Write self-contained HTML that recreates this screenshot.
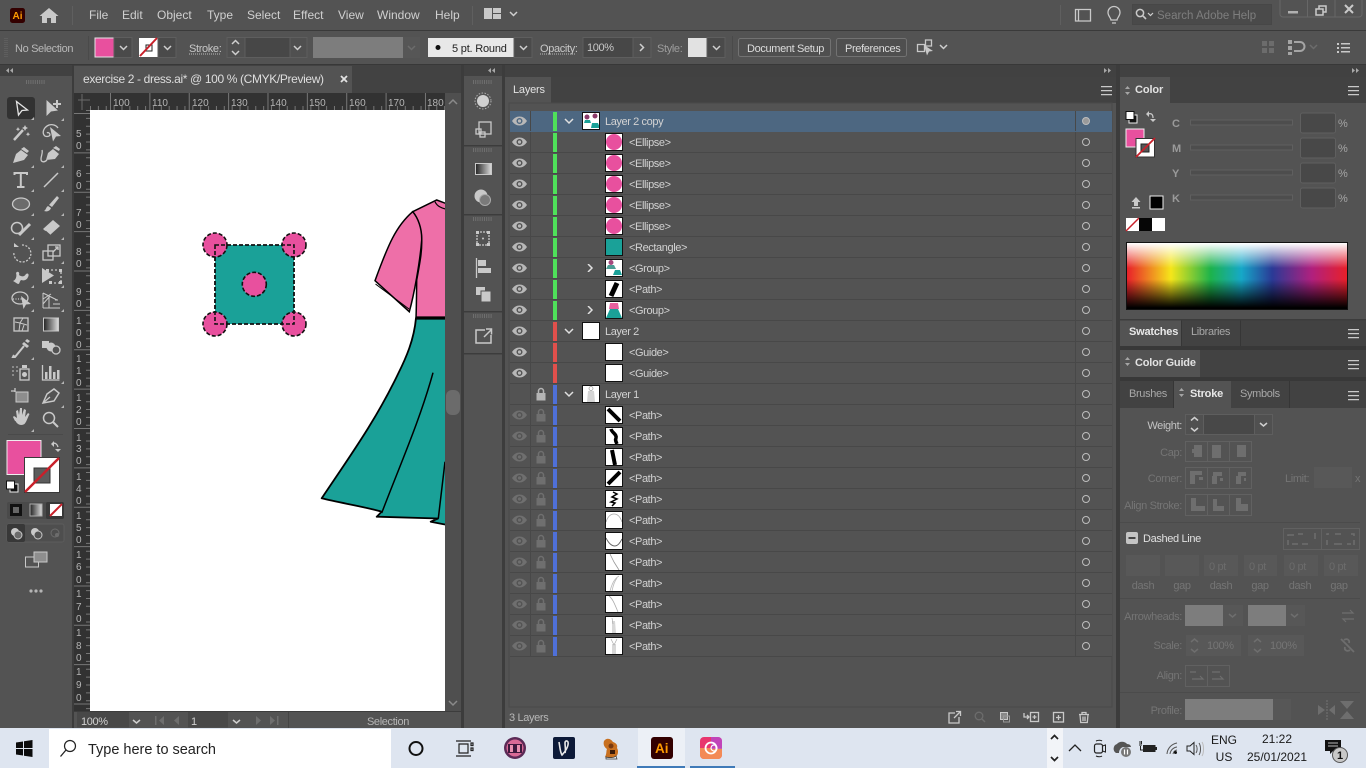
<!DOCTYPE html>
<html><head><meta charset="utf-8"><title>Adobe Illustrator</title>
<style>
*{box-sizing:border-box}
html,body{margin:0;width:1366px;height:768px;overflow:hidden;background:#535353;font-family:"Liberation Sans",sans-serif}
.a{position:absolute}
#rows{position:absolute;left:510px;top:111px;width:602px}
.r{position:relative;height:21px;background:#535353;border-bottom:1px solid #484848;color:#d2d2d2;font-size:11px;letter-spacing:-.4px;line-height:22px}
.r:before{content:"";position:absolute;left:20px;top:0;bottom:0;width:1px;background:#484848}
.r:after{content:"";position:absolute;left:565px;top:0;bottom:0;width:1px;background:#484848}
.sel{background:#4d6781;border-bottom-color:#4d6781}
.e{position:absolute;left:2px;top:5px;width:15px;height:10px;color:#b8b8b8}
.d .e{color:#6f6f6f}
.k{position:absolute;left:25px;top:3px;width:12px;height:14px;color:#6f6f6f}
.k.on{color:#b5b5b5}
.b{position:absolute;left:43px;top:1px;width:3.5px;height:19px}
.g .b{background:#4fe05a}.h .b{background:#e0504c}.d .b,.j .b{background:#4f70d8}
.c{position:absolute;left:54px;top:6px;width:10px;height:8px}
.c.z{left:75px}
.th{position:absolute;left:95px;top:1px;width:18px;height:18px;background:#fff;outline:1px solid #111;outline-offset:-1px}
.th.l{left:72px}
.n{position:absolute;left:119px;top:0;white-space:nowrap}
.n.l{left:95px}
.o{position:absolute;left:572px;top:6px;width:8px;height:8px;border:1.4px solid #bdbdbd;border-radius:50%;z-index:2}
.sel .o{background:#9a9a9a}
#sp{position:absolute;left:1126px;top:242px;width:222px;height:68px;border:1px solid #111;background:linear-gradient(to bottom,#fff 0,rgba(255,255,255,0) 38%,rgba(0,0,0,0) 55%,#000 98%),linear-gradient(90deg,#e8202a 0,#f5e61a 20%,#1db34b 38%,#16a8c8 52%,#2a3a96 66%,#b0207e 84%,#e8202a 100%)}
svg text{font-family:"Liberation Sans",sans-serif;white-space:pre}
.m{font-size:12px;fill:#d0d0d0}
.s{font-size:11px;fill:#c8c8c8;letter-spacing:-.35px}
.w{font-size:11px;fill:#757575;letter-spacing:-.35px}
.ru{font-size:10px;fill:#b4b4b4}
.tb{font-size:12px;fill:#1a1a1a}
.ch{fill:none;stroke:#cfcfcf;stroke-width:1.5}
.i{fill:#c9c9c9}
.l1{fill:none;stroke:#c9c9c9;stroke-width:1.3}
.w1{fill:none;stroke:#6e6e6e;stroke-width:1.2}
.wf{fill:#6e6e6e}
</style></head><body>

<svg width="0" height="0" style="position:absolute">
<symbol id="E" viewBox="0 0 15 10"><path fill="currentColor" d="M0 5C2 2 4.500 .5 7.500 .5S13 2 15 5c-2 3-4.500 4.500-7.500 4.500S2 8 0 5zM7.500 2a3 3 0 1 0 0 6 3 3 0 0 0 0-6z"/><circle cx="7.500" cy="5" r="1.600" fill="currentColor"/></symbol>
<symbol id="K" viewBox="0 0 12 14"><path fill="currentColor" d="M1.500 6h9v7.500h-9z"/><path fill="none" stroke="currentColor" stroke-width="1.500" d="M3.500 6V4a2.500 2.500 0 0 1 5 0v2"/></symbol>
<symbol id="D" viewBox="0 0 10 8"><path fill="none" stroke="#e0e0e0" stroke-width="1.500" d="M1 2l4 4 4-4"/></symbol>
<symbol id="Z" viewBox="0 0 10 8"><path fill="none" stroke="#e0e0e0" stroke-width="1.500" d="M3 0l4 4-4 4"/></symbol>
<symbol id="P" viewBox="0 0 18 18"><circle cx="9" cy="9" r="8" fill="#e8509e"/></symbol>
</svg>

<svg class="a" style="left:0;top:0" width="1366" height="768" viewBox="0 0 1366 768">
<defs>
<linearGradient id="gr"><stop offset="0" stop-color="#222"/><stop offset="1" stop-color="#ddd"/></linearGradient>
</defs>
<!-- backgrounds -->
<rect width="1366" height="30" fill="#535353"/>
<rect y="30" width="1366" height="1" fill="#3a3a3a"/>
<rect y="31" width="1366" height="33" fill="#535353"/>
<rect y="64" width="1366" height="13" fill="#414141"/>
<rect y="64" width="1366" height="1" fill="#383838"/>
<rect y="76" width="72" height="652" fill="#535353"/>
<rect x="72" y="65" width="2" height="663" fill="#3c3c3c"/>
<rect x="74" y="65" width="387" height="28" fill="#424242"/>
<rect x="74" y="66" width="278" height="27" fill="#535353"/>
<rect x="74" y="93" width="371" height="17" fill="#323232"/>
<rect x="74" y="93" width="16" height="618" fill="#323232"/>
<rect x="90" y="110" width="355" height="601" fill="#fff"/>
<rect x="445" y="93" width="16" height="618" fill="#4f4f4f"/>
<rect x="74" y="711" width="387" height="17" fill="#535353"/>
<rect x="74" y="711" width="387" height="1" fill="#3c3c3c"/>
<rect x="461" y="65" width="3" height="663" fill="#3c3c3c"/>
<rect x="464" y="76" width="38" height="652" fill="#535353"/>
<rect x="464" y="145" width="38" height="1.500" fill="#3c3c3c"/><rect x="464" y="214" width="38" height="1.500" fill="#3c3c3c"/><rect x="464" y="311" width="38" height="1.500" fill="#3c3c3c"/><rect x="464" y="353" width="38" height="1.500" fill="#3c3c3c"/>
<rect x="502" y="65" width="3" height="663" fill="#3c3c3c"/>
<rect x="505" y="77" width="611" height="651" fill="#535353"/>
<rect x="505" y="77" width="611" height="26" fill="#424242"/>
<rect x="505" y="77" width="46" height="26" fill="#535353"/>
<rect x="1116" y="65" width="4" height="663" fill="#3c3c3c"/>
<rect x="1120" y="77" width="246" height="651" fill="#535353"/>
<rect x="1120" y="77" width="246" height="26" fill="#424242"/>
<rect x="1120" y="77" width="50" height="26" fill="#535353"/>
<rect x="1120" y="320" width="246" height="26" fill="#424242"/>
<rect x="1120" y="320" width="62" height="26" fill="#535353"/>
<rect x="1181" y="320" width="1" height="26" fill="#363636"/><rect x="1240" y="320" width="1" height="26" fill="#363636"/>
<rect x="1120" y="346" width="246" height="4" fill="#383838"/>
<rect x="1120" y="350" width="246" height="27" fill="#424242"/>
<rect x="1120" y="350" width="80" height="27" fill="#535353"/>
<rect x="1120" y="377" width="246" height="4" fill="#383838"/>
<rect x="1120" y="381" width="246" height="27" fill="#424242"/>
<rect x="1174" y="381" width="57" height="27" fill="#535353"/>
<rect x="1173" y="381" width="1" height="27" fill="#363636"/><rect x="1289" y="381" width="1" height="27" fill="#363636"/>
<rect x="1120" y="319" width="246" height="1.500" fill="#3c3c3c"/>
<rect x="509" y="103" width="603" height="604" fill="none" stroke="#494949"/>

<!-- top menu -->
<rect x="10" y="8" width="15" height="15" rx="2.500" fill="#330000"/>
<text x="12.500" y="19" font-size="10" font-weight="700" fill="#ff9a00">Ai</text>
<path class="i" d="M49 8l9.500 8h-2.500v7h-5v-5h-4v5h-5v-7h-2.500z"/>
<rect x="72" y="6" width="1" height="19" fill="#5f5f5f"/>
<text class="m" x="89" y="19">File</text><text class="m" x="122" y="19">Edit</text><text class="m" x="157" y="19">Object</text><text class="m" x="207" y="19">Type</text><text class="m" x="247" y="19">Select</text><text class="m" x="293" y="19">Effect</text><text class="m" x="338" y="19">View</text><text class="m" x="377" y="19">Window</text><text class="m" x="435" y="19">Help</text>
<rect x="472" y="6" width="1" height="19" fill="#5f5f5f"/>
<path class="i" d="M484 8h8v11h-8zM493 8h8v5h-8zM493 14h8v5h-8z"/>
<path class="ch" d="M510 12l3.500 3.500 3.500-3.500"/>
<rect x="1060" y="5" width="1" height="20" fill="#5f5f5f"/>
<path class="l1" d="M1075.500 9.500h15v11.500h-15zM1078.500 9.500v11.500"/>
<path class="l1" d="M1111 20c0-2-3-4-3-7.500a6 6 0 0 1 12 0c0 3.500-3 5.500-3 7.500zM1112 23h4"/>
<rect x="1132.500" y="4.500" width="139" height="20" fill="#4a4a4a" stroke="#474747"/>
<circle cx="1140" cy="13" r="3.600" class="l1" style="stroke-width:1.500"/><path class="l1" style="stroke-width:1.600" d="M1143 16l3 3"/><path class="ch" style="stroke-width:1.200" d="M1148 13l2.500 2.500 2.500-2.500"/>
<text x="1157" y="19" font-size="11.500" fill="#7e7e7e">Search Adobe Help</text>
<path d="M1280 0v14a3 3 0 0 0 3 3h76a3 3 0 0 0 3-3V0M1307.500 0v17M1335 0v17" fill="none" stroke="#676767"/>
<rect x="1288" y="11" width="10" height="2.500" fill="#b0b0b0"/>
<path class="l1" style="stroke-width:1.500" d="M1316 9h7v6h-7zM1319 9V6h7v6h-3"/>
<path class="l1" style="stroke-width:2" d="M1345 5l8 8M1353 5l-8 8"/>

<!-- control bar -->
<path d="M5 38v20M7 38v20" stroke="#6a6a6a" stroke-dasharray="1 1" fill="none"/>
<text class="s" x="15" y="52" style="fill:#b8b8b8">No Selection</text>
<rect x="88" y="36" width="1" height="24" fill="#4a4a4a"/>
<rect x="95" y="38" width="19" height="19" fill="#e8509e" stroke="#e5e5e5"/>
<rect x="114" y="37.500" width="18" height="20" fill="#4a4a4a" stroke="#5e5e5e"/><path class="ch" d="M120 46l3.500 3.500 3.500-3.500"/>
<rect x="139" y="38" width="19" height="19" fill="#fff"/><rect x="146" y="45" width="6" height="6" fill="none" stroke="#222"/><path d="M140 56l17-18" stroke="#c8202a" stroke-width="2"/>
<rect x="158" y="37.500" width="18" height="20" fill="#4a4a4a" stroke="#5e5e5e"/><path class="ch" d="M164 46l3.500 3.500 3.500-3.500"/>
<text class="s" x="189" y="52">Stroke:</text><path d="M189 54h31" stroke="#bbb" stroke-dasharray="1 1"/>
<rect x="227" y="37.500" width="80" height="20" fill="#474747" stroke="#5e5e5e"/><rect x="227" y="37.500" width="18" height="20" fill="#505050" stroke="#5e5e5e"/><rect x="290" y="37.500" width="17" height="20" fill="#505050" stroke="#5e5e5e"/>
<path class="ch" d="M232 44l3.500-3.500 3.500 3.500M232 51l3.500 3.500 3.500-3.500M294 46l3.500 3.500 3.500-3.500"/>
<rect x="313" y="37" width="90" height="21" fill="#7d7d7d"/><rect x="403" y="37" width="17" height="21" fill="#565656"/><path class="ch" style="stroke:#6c6c6c" d="M408 46l3.500 3.500 3.500-3.500"/>
<rect x="428" y="38" width="86" height="19" fill="#e8e8e8"/><circle cx="438" cy="47.500" r="2.500" fill="#111"/>
<text x="452" y="52" font-size="11" fill="#222" letter-spacing="-.2">5 pt. Round</text>
<rect x="514" y="37.500" width="18" height="20" fill="#4a4a4a" stroke="#5e5e5e"/><path class="ch" d="M520 46l3.500 3.500 3.500-3.500"/>
<text class="s" x="540" y="52">Opacity:</text><path d="M540 54h36" stroke="#bbb" stroke-dasharray="1 1"/>
<rect x="583" y="37.500" width="50" height="20" fill="#474747" stroke="#5e5e5e"/><rect x="633" y="37.500" width="18" height="20" fill="#505050" stroke="#5e5e5e"/>
<text class="s" x="587" y="51">100%</text><path class="ch" d="M640 44l3.500 3.500-3.500 3.500"/>
<text class="s" x="657" y="52" style="fill:#9c9c9c">Style:</text>
<rect x="688" y="38" width="19" height="19" fill="#e2e2e2"/><rect x="707" y="37.500" width="18" height="20" fill="#4a4a4a" stroke="#5e5e5e"/><path class="ch" d="M713 46l3.500 3.500 3.500-3.500"/>
<rect x="732" y="36" width="1" height="24" fill="#4a4a4a"/>
<rect x="738.500" y="38.500" width="92" height="18" rx="2" fill="#4f4f4f" stroke="#727272"/><text x="747" y="52" font-size="11" fill="#dcdcdc" letter-spacing="-.35">Document Setup</text>
<rect x="836.500" y="38.500" width="70" height="18" rx="2" fill="#4f4f4f" stroke="#727272"/><text x="845" y="52" font-size="11" fill="#dcdcdc" letter-spacing="-.35">Preferences</text>
<path class="l1" d="M917.500 44.500h7v7h-7zM925.500 40h6v6h-6z"/><path class="i" d="M924 45l9 6-4 .5-2 4z"/>
<path class="ch" d="M940 45l3.500 3.500 3.500-3.500"/>
<path fill="#6c6c6c" d="M1262 41h5v5h-5zM1269 41h5v5h-5zM1262 48h5v5h-5zM1269 48h5v5h-5z"/>
<path fill="#a5a5a5" d="M1288 40h4v4h-4zM1288 46h4v4h-4zM1288 52h4v3h-4z"/><path fill="none" stroke="#a5a5a5" stroke-width="2" d="M1294 42h6a4.500 4.500 0 0 1 0 9h-6"/>
<path class="ch" style="stroke:#6c6c6c" d="M1310 45l3.500 3.500 3.500-3.500"/>
<path class="i" d="M1337 43h2v2h-2zM1337 47h2v2h-2zM1337 51h2v2h-2zM1341 43h9v1.500h-9zM1341 47h9v1.500h-9zM1341 51h9v1.500h-9z"/>

<!-- collapse arrows -->
<g fill="#a8a8a8"><path d="M13 68v5l-3-2.500zM9 68v5l-3-2.500z"/><path d="M495 68v5l-3-2.500zM491 68v5l-3-2.500z"/><path d="M1104 68v5l3-2.500zM1108 68v5l3-2.500z"/><path d="M1352 68v5l3-2.500zM1356 68v5l3-2.500z"/></g>
<g stroke="#6f6f6f" stroke-dasharray="1 1.200" fill="none" stroke-width="4"><path d="M26 82h19M473 82h19M473 150h19M473 219h19M473 316h19"/></g>

<!-- tab -->
<text x="83" y="83" font-size="12" fill="#dedede" textLength="241">exercise 2 - dress.ai* @ 100 % (CMYK/Preview)</text>
<path d="M341 76l6 6M347 76l-6 6" stroke="#e2e2e2" stroke-width="1.800"/>

<!-- rulers -->
<path d="M78 100h12M82 94v16" stroke="#6a6a6a" fill="none"/>
<line x1="110" y1="101.500" x2="445" y2="101.500" stroke="#777" stroke-width="17" stroke-dasharray="1 38.370"/>
<line x1="90" y1="108" x2="445" y2="108" stroke="#777" stroke-width="4" stroke-dasharray="1 6.870"/>
<g class="ru"><text x="113" y="106">100</text><text x="152" y="106">110</text><text x="192" y="106">120</text><text x="231" y="106">130</text><text x="270" y="106">140</text><text x="309" y="106">150</text><text x="349" y="106">160</text><text x="388" y="106">170</text><text x="427" y="106">180</text></g>
<line x1="82" y1="113" x2="82" y2="711" stroke="#777" stroke-width="16" stroke-dasharray="1 38.370"/>
<line x1="88" y1="110" x2="88" y2="711" stroke="#777" stroke-width="4" stroke-dasharray="1 6.870"/>
<g class="ru" text-anchor="start"><text x="76" y="137">5</text><text x="76" y="149">0</text><text x="76" y="177">6</text><text x="76" y="189">0</text><text x="76" y="216">7</text><text x="76" y="228">0</text><text x="76" y="255">8</text><text x="76" y="267">0</text><text x="76" y="295">9</text><text x="76" y="307">0</text><text x="76" y="324">1</text><text x="76" y="336">0</text><text x="76" y="348">0</text><text x="76" y="362">1</text><text x="76" y="374">1</text><text x="76" y="386">0</text><text x="76" y="401">1</text><text x="76" y="413">2</text><text x="76" y="425">0</text><text x="76" y="441">1</text><text x="76" y="452">3</text><text x="76" y="464">0</text><text x="76" y="480">1</text><text x="76" y="492">4</text><text x="76" y="504">0</text><text x="76" y="519">1</text><text x="76" y="531">5</text><text x="76" y="543">0</text><text x="76" y="558">1</text><text x="76" y="570">6</text><text x="76" y="583">0</text><text x="76" y="597">1</text><text x="76" y="610">7</text><text x="76" y="622">0</text><text x="76" y="636">1</text><text x="76" y="649">8</text><text x="76" y="661">0</text><text x="76" y="675">1</text><text x="76" y="688">9</text><text x="76" y="701">0</text></g>

<!-- artwork -->
<svg x="90" y="110" width="355" height="601" viewBox="90 110 355 601">
<path d="M416 318C414 340 406 358 398 374C376 420 350 456 321.700 498.300C340 503 362 506 381.700 511.700L376.700 516.700L438 518.500L430.700 521.700L445 524.500H460V318Z" fill="#1aa198" stroke="#000" stroke-width="1.800" stroke-linejoin="round"/>
<path d="M433 372.700C420 420 400 465 381.700 513M445 461.700L438.300 518.500" fill="none" stroke="#000" stroke-width="1.500"/>
<path d="M412.700 211.700L436.700 200L450 205V318H416C416.500 305 416.500 295 416.700 280C420 262 422 252 421.700 240C421 228 418 218 412.700 211.700Z" fill="#ee6fa8" stroke="#000" stroke-width="1.500"/>
<path d="M412.700 211.700C396 226 388 245 375 280.700L409.300 311.700C414 295 420 262 421.700 240C422 228 418 218 412.700 211.700Z" fill="#ee6fa8" stroke="#000" stroke-width="1.500"/>
<path d="M375.500 284L409 309" stroke="#000" fill="none"/>
<path d="M435 201.700C437 206 441 208.500 450 210" fill="none" stroke="#000" stroke-width="1.200"/>
<path d="M416 318H450" stroke="#000" stroke-width="3.200"/>
<g stroke="#111" stroke-width="1.600" stroke-dasharray="4 2">
<rect x="215" y="245" width="79" height="79" fill="#1aa198"/>
<circle cx="215" cy="245" r="12" fill="#e8509e"/><circle cx="294" cy="245" r="12" fill="#e8509e"/><circle cx="215" cy="324" r="12" fill="#e8509e"/><circle cx="294" cy="324" r="12" fill="#e8509e"/><circle cx="254.300" cy="284.300" r="12" fill="#e8509e"/>
<rect x="215" y="245" width="79" height="79" fill="none"/>
</g>
</svg>
<rect x="446" y="390" width="14" height="25" rx="6" fill="#6b6b6b"/>
<path class="ch" style="stroke:#8a8a8a" d="M449 104l4-4 4 4M449 701l4 4 4-4"/>

<!-- tools -->
<rect x="7" y="97" width="28" height="22" rx="3" fill="#323232"/>
<path d="M16.500 101.500L27.500 110L22 110.500L18.500 115Z" fill="none" stroke="#e5e5e5" stroke-width="1.300"/>
<path class="i" d="M46.500 100V116L51 111.500L58 110.500Z"/><path class="l1" style="stroke-width:2" d="M57 100v8M53 104h8"/>
<path class="l1" style="stroke-width:2.500" d="M14 140l9-10"/><path class="i" d="M25 125l1 2 2 1-2 1-1 2-1-2-2-1 2-1zM18 127l.7 1.500 1.500.7-1.500.7-.7 1.500-.7-1.500-1.500-.7 1.500-.7zM28 132l.7 1.500 1.500.7-1.500.7-.7 1.500-.7-1.500-1.500-.7 1.500-.7z"/>
<path class="l1" d="M58 128c-2-3-6-4-9-3-5 2-7 7-5 10 1 2 5 2 6 0 0-2-2-3-3-2"/><path class="i" d="M50 127l11 9-5 .5-3 5z"/>
<path class="i" d="M13 163l3-9 5-4 7 5-4 5zM21 149l3-2 5 4-2 2z"/>
<path class="i" d="M46 160l2-7 5-4 6 5-4 5zM53 148l3-2 4 3-1 2z"/><path class="l1" d="M47 160c-3 3-6 2-6-1s2-6 1-9"/>
<path class="l1" style="stroke-width:2" d="M14.500 175v-2h12.500v2M20.800 173v14M17 187h7.500"/>
<path class="l1" style="stroke-width:1.500" d="M44 187L58 173"/>
<ellipse cx="21" cy="204" rx="8.500" ry="6" fill="#6b6b6b" stroke="#c9c9c9" stroke-width="1.300"/>
<path class="i" d="M57 196l2 2-7 9-3-2zM48 206l3 2c-1 3-4 4-7 3 2-1 2-4 4-5z"/>
<circle cx="17" cy="228" r="5.500" class="l1" style="stroke-width:1.500" fill="none"/><path class="l1" style="stroke-width:3" d="M19 235l11-11"/>
<path class="i" d="M43 229l10-9 7 6-10 9z"/><path d="M45.500 231l4.500 4" stroke="#535353"/>
<path class="l1" stroke-dasharray="2 1.500" d="M22 245a8.500 8.500 0 1 1-8 7"/><path class="i" d="M14 247v-4l5 4z"/>
<rect x="43" y="251" width="10" height="9" class="l1"/><rect x="48" y="245" width="12" height="11" class="l1"/><path class="l1" d="M53 252l5-5M55 247h3v3"/>
<path class="i" d="M13 281c3-1 4-5 3-8 2-3 4 0 3 2 3 2 5 2 7-1 3-2 3 2 2 3-1 3-4 4-7 3-2 2-1 4-3 4-2-1-3-2-5-3z"/>
<path class="i" d="M42 268v15l12-7.500z"/><path class="l1" stroke-dasharray="2 2" d="M47 270h14v13h-11"/><path class="i" d="M46 269h3v3h-3zM59 269h3v3h-3zM59 281h3v3h-3zM49 281h3v3h-3z"/>
<ellipse cx="20" cy="298" rx="8" ry="6" class="l1"/><path class="l1" stroke-dasharray="1 1.500" d="M13 299h10"/><path class="i" d="M21 296l10 8-5 .5-2.500 4.500z"/>
<path class="l1" style="stroke-width:1" d="M43 293l14 7 M43 293v15M43 299l8-5M43 304l7-8M49 296v12M43 308h17M53 304h7M55 300h3"/>
<rect x="14" y="318" width="14" height="13" class="l1"/><path class="l1" style="stroke-width:1" d="M15 322l5 1 3-5M20 323l-1 8M20 323l7 2M22 331l2-6"/>
<rect x="43.500" y="318" width="15" height="13" fill="url(#gr)" stroke="#c9c9c9"/>
<path class="l1" style="stroke-width:2" d="M14 355l-1 2 2 0 9-11"/><path class="i" d="M24 342l5 4-2 2-5-4zM25 341l2-2 3 2-2 2z"/>
<rect x="42" y="341" width="7" height="7" class="i"/><circle cx="51" cy="347" r="4.500" class="i"/><circle cx="56" cy="350" r="4" fill="#535353" stroke="#c9c9c9" stroke-width="1.300"/>
<path fill="#8a8a8a" d="M12 366h2v2h-2zM16 366h2v2h-2zM12 370h2v2h-2zM16 370h2v2h-2zM12 374h2v2h-2z"/><rect x="20" y="369" width="9" height="11" class="l1"/><circle cx="24.500" cy="374.500" r="2.500" class="i"/><rect x="22" y="365" width="5" height="3" class="i"/>
<path class="l1" d="M42.500 365v15h17"/><path class="i" d="M45 372h2.500v7H45zM49 366h2.500v13H49zM53 372h2.500v7H53zM57 370h2.500v9H57z"/>
<path class="l1" d="M15 388v4M11 391h4"/><rect x="16" y="392" width="12" height="10" fill="#8d8d8d" stroke="#c9c9c9"/>
<path class="l1" style="stroke-width:1.500" d="M43 403l4-9 7-5 5 4-5 8z"/><path class="l1" d="M43 403l7-6"/>
<path class="i" d="M16 419l-2-4 1-1 3 2-1-7 2-1 1 5 1-7h2l0 7 2-6 2 1-1 7 3-4 1.500 1c-2 4-3 8-5 10-3 2-7 1-9-3z" transform="translate(-1 2)"/>
<circle cx="49" cy="418" r="5.500" class="l1" style="stroke-width:1.500" fill="none"/><path class="l1" style="stroke-width:2" d="M53 422l5 5"/>
<g fill="#b5b5b5"><path d="M34 117v3h-3zM64 118v3h-3zM34 165v3h-3zM64 165v3h-3zM34 189v3h-3zM64 189v3h-3zM34 213v3h-3zM64 213v3h-3zM34 237v3h-3zM64 237v3h-3zM34 261v3h-3zM64 261v3h-3zM34 285v3h-3zM64 285v3h-3zM34 309v3h-3zM64 309v3h-3zM34 357v3h-3zM64 381v3h-3zM64 405v3h-3zM34 429v3h-3z"/></g>
<rect x="8" y="434" width="55" height="1" fill="#4a4a4a"/>
<rect x="7" y="440.500" width="34" height="34" fill="#e8509e" stroke="#eee"/>
<rect x="24.500" y="457.500" width="35" height="35" fill="#fff" stroke="#3a3a3a"/><rect x="34" y="468" width="16" height="15" fill="#5c5c5c" stroke="#333"/><path d="M25 492l34-34" stroke="#c8202a" stroke-width="2.500"/>
<path class="l1" d="M52 444c3-2 5 0 6 3"/><path class="i" d="M51 444l3-3v6zM58 452l-3-3h6z"/>
<rect x="10" y="484" width="8" height="8" fill="#111" stroke="#eee"/><rect x="6.500" y="481" width="8" height="8" fill="#fff" stroke="#111"/>
<rect x="7" y="502" width="57" height="17" rx="2" fill="#4a4a4a"/><rect x="46" y="502" width="18" height="17" rx="2" fill="#383838"/>
<rect x="10" y="504" width="12" height="12" fill="#111"/><rect x="13" y="507" width="6" height="6" fill="#666"/>
<rect x="30" y="504" width="12" height="12" fill="url(#gr)" stroke="#aaa"/><rect x="50" y="504" width="12" height="12" fill="#fff"/><path d="M50 516l12-12" stroke="#c8202a" stroke-width="2"/>
<rect x="7" y="524" width="57" height="18" rx="2" fill="#4e4e4e" stroke="#5c5c5c"/><rect x="7" y="524" width="18" height="18" rx="2" fill="#383838"/>
<circle cx="15" cy="532" r="4" class="i"/><circle cx="18" cy="535" r="4" fill="#6c6c6c" stroke="#c9c9c9"/>
<circle cx="35" cy="532" r="4" class="i"/><circle cx="38" cy="535" r="4" fill="#535353" stroke="#c9c9c9"/>
<circle cx="55" cy="533" r="4" fill="none" stroke="#6c6c6c"/><circle cx="57" cy="535" r="2" fill="#6c6c6c"/>
<rect x="25.500" y="557" width="13" height="10" fill="#535353" stroke="#c9c9c9"/><rect x="34" y="552" width="13" height="10" fill="#8e8e8e" stroke="#c9c9c9"/>
<g fill="#b5b5b5"><circle cx="31" cy="591" r="1.600"/><circle cx="36" cy="591" r="1.600"/><circle cx="41" cy="591" r="1.600"/></g>

<!-- dock icons -->
<circle cx="483" cy="101" r="6" fill="#d0d0d0"/><circle cx="483" cy="101" r="8" fill="none" stroke="#b0b0b0" stroke-dasharray="1.500 1.500"/>
<rect x="479" y="122" width="12" height="12" class="l1"/><rect x="476" y="129" width="5" height="5" class="l1"/><rect x="480" y="132" width="5" height="5" class="l1"/>
<rect x="475.500" y="163.500" width="16" height="11" fill="url(#gr)" stroke="#c9c9c9"/>
<circle cx="481" cy="196" r="6.500" fill="#c9c9c9"/><circle cx="485" cy="200" r="5.500" fill="#7a7a7a" stroke="#aaa"/>
<rect x="477" y="232" width="12" height="13" class="l1" stroke-dasharray="2 1"/><path class="i" d="M476 231h3v3h-3zM487 231h3v3h-3zM476 243h3v3h-3zM487 243h3v3h-3z"/><circle cx="483" cy="238.500" r="1" class="i"/>
<path class="l1" d="M476.500 258v20"/><path class="i" d="M478 260h8v6h-8zM478 268h13v5h-13z"/>
<path class="i" d="M476 287h9v8h-9z"/><path d="M481 291h10v11h-10z" fill="#c9c9c9" stroke="#535353"/>
<path class="l1" style="stroke-width:1.500" d="M485 330h-9v13h15v-8M484 337l7-7M486 329h5.500v5.500"/>

<!-- panel titles -->
<text x="513" y="93" font-size="11" fill="#e2e2e2" letter-spacing="-.2">Layers</text>
<path class="i" d="M1101 86h11v1.200h-11zM1101 90h11v1.200h-11zM1101 94h11v1.200h-11zM1348 86h11v1.200h-11zM1348 90h11v1.200h-11zM1348 94h11v1.200h-11zM1348 329h11v1.200h-11zM1348 333h11v1.200h-11zM1348 337h11v1.200h-11zM1348 360h11v1.200h-11zM1348 364h11v1.200h-11zM1348 368h11v1.200h-11zM1348 391h11v1.200h-11zM1348 395h11v1.200h-11zM1348 399h11v1.200h-11z"/>
<path d="M1105 111h6v6z" fill="#eee"/>
<path d="M1125 89l2.500-3 2.500 3zM1125 92l2.500 3 2.500-3zM1125 360l2.500-3 2.500 3zM1125 363l2.500 3 2.500-3zM1179 391l2.500-3 2.500 3zM1179 394l2.500 3 2.500-3z" fill="#a5a5a5"/>
<text x="1135" y="93" font-size="11" font-weight="700" fill="#e2e2e2" letter-spacing="-.1">Color</text>
<text x="1129" y="335" font-size="11" font-weight="700" fill="#e8e8e8" letter-spacing="-.2">Swatches</text>
<text x="1191" y="335" class="s" style="fill:#a8a8a8">Libraries</text>
<text x="1135" y="366" font-size="11" font-weight="700" fill="#e2e2e2" letter-spacing="-.2">Color Guide</text>
<text x="1129" y="397" class="s" style="fill:#a8a8a8">Brushes</text>
<text x="1190" y="397" font-size="11" font-weight="700" fill="#e8e8e8" letter-spacing="-.2">Stroke</text>
<text x="1240" y="397" class="s" style="fill:#a8a8a8">Symbols</text>

<!-- color panel -->
<rect x="1129" y="115" width="8" height="8" fill="#111" stroke="#eee"/><rect x="1126" y="111.500" width="8" height="8" fill="#fff" stroke="#111"/>
<path class="l1" d="M1148 114c3-1 5 0 5 4"/><path class="i" d="M1146 114l3-3v6zM1153 122l-3-3h6z"/>
<rect x="1126" y="129" width="18" height="18" fill="#e8509e" stroke="#eee"/>
<rect x="1136" y="138.500" width="18.500" height="18.500" fill="#fff" stroke="#333"/><rect x="1141" y="144" width="8" height="8" fill="#555" stroke="#222"/><path d="M1136 157l19-19" stroke="#c8202a" stroke-width="1.800"/>
<g font-size="11" font-weight="700" fill="#9a9a9a"><text x="1172" y="127">C</text><text x="1172" y="152">M</text><text x="1172" y="177">Y</text><text x="1172" y="202">K</text></g>
<g fill="#4d4d4d" stroke="#5f5f5f"><rect x="1190.500" y="120" width="102" height="5"/><rect x="1190.500" y="145" width="102" height="5"/><rect x="1190.500" y="170" width="102" height="5"/><rect x="1190.500" y="195" width="102" height="5"/></g>
<g fill="#484848" stroke="#5f5f5f"><rect x="1300.500" y="113" width="35" height="20" rx="2"/><rect x="1300.500" y="138" width="35" height="20" rx="2"/><rect x="1300.500" y="163" width="35" height="20" rx="2"/><rect x="1300.500" y="188" width="35" height="20" rx="2"/></g>
<g font-size="11" fill="#a5a5a5"><text x="1338" y="127">%</text><text x="1338" y="152">%</text><text x="1338" y="177">%</text><text x="1338" y="202">%</text></g>
<path class="i" d="M1136 197l-4.500 5h2.500v4h4v-4h2.500zM1132 207h8v1.500h-8z"/>
<rect x="1150" y="196" width="13" height="13" fill="#000" stroke="#eee"/>
<rect x="1126" y="218" width="13" height="13" fill="#fff"/><path d="M1126 231l13-13" stroke="#c8202a" stroke-width="1.500"/><rect x="1139" y="218" width="13" height="13" fill="#060606"/><rect x="1152" y="218" width="13" height="13" fill="#fff"/>

<!-- stroke panel -->
<text class="s" x="1182" y="429" text-anchor="end" style="fill:#c4c4c4">Weight:</text>
<rect x="1185.500" y="414.500" width="87" height="20" fill="#484848" stroke="#5e5e5e"/><rect x="1185.500" y="414.500" width="18" height="20" fill="#505050" stroke="#5e5e5e"/><rect x="1254.500" y="414.500" width="18" height="20" fill="#505050" stroke="#5e5e5e"/>
<path class="ch" d="M1191 420.500l3.500-3 3.500 3M1191 428l3.500 3 3.500-3M1260 423l3.500 3 3.500-3"/>
<g class="w" text-anchor="end"><text x="1182" y="456">Cap:</text><text x="1182" y="482">Corner:</text><text x="1182" y="509">Align Stroke:</text><text x="1182" y="620">Arrowheads:</text><text x="1182" y="649">Scale:</text><text x="1182" y="679">Align:</text><text x="1182" y="714">Profile:</text></g>
<text class="w" x="1285" y="482">Limit:</text><rect x="1314" y="467" width="38" height="21" fill="#585858"/><text class="w" x="1355" y="482">x</text>
<g fill="none" stroke="#616161"><rect x="1185.500" y="441.500" width="66" height="20"/><path d="M1207.500 441.500v20M1229.500 441.500v20"/><rect x="1185.500" y="467.500" width="66" height="21"/><path d="M1207.500 467.500v21M1229.500 467.500v21"/><rect x="1185.500" y="494.500" width="66" height="21"/><path d="M1207.500 494.500v21M1229.500 494.500v21"/></g>
<path class="wf" d="M1194 445h8v4h-8zM1194 453h8v4h-8zM1192 449h10v4h-10zM1212 445h9v13h-9zM1237 445h9v12h-9zM1190 471h12v4h-12zM1190 475h5v9h-5zM1199 477h4v3h-4zM1213 472h9v4h-9zM1212 476h5v8h-5zM1220 478h3v3h-3zM1238 472h8v4h-8zM1236 476h5v8h-5zM1244 478h2v3h-2zM1191 498h5v13h-5zM1196 506h9v5h-9zM1213 499h4v12h-4zM1213 506h11v5h-11zM1236 498h5v13h-5zM1241 504h7v7h-7z"/>
<rect x="1120" y="522" width="240" height="1" fill="#4b4b4b"/><rect x="1120" y="598" width="240" height="1" fill="#4b4b4b"/><rect x="1120" y="692" width="240" height="1" fill="#4b4b4b"/>
<rect x="1126" y="532" width="12" height="12" rx="2" fill="#c4c4c4"/><rect x="1128.500" y="537" width="7" height="2" fill="#444"/>
<text x="1143" y="542" class="s" style="fill:#e0e0e0">Dashed Line</text>
<rect x="1283.500" y="528.500" width="76" height="21" fill="none" stroke="#616161"/><path d="M1321.500 528.500v21" stroke="#616161"/>
<path d="M1288 545v-5M1292 544h6M1302 544h6M1288 536v-1h6M1298 534h5M1315 533v6M1327 545v-5M1327 535v-1h2M1335 534h6M1351 534h3v2M1354 540v5M1334 544h8M1347 544h4" stroke="#6e6e6e" fill="none" stroke-width="1.500"/>
<g fill="#585858"><rect x="1126" y="555" width="34" height="21"/><rect x="1165" y="555" width="34" height="21"/><rect x="1204" y="555" width="34" height="21"/><rect x="1244" y="555" width="33" height="21"/><rect x="1284" y="555" width="34" height="21"/><rect x="1324" y="555" width="34" height="21"/></g>
<g class="w" style="fill:#6c6c6c"><text x="1209" y="570">0 pt</text><text x="1249" y="570">0 pt</text><text x="1289" y="570">0 pt</text><text x="1329" y="570">0 pt</text></g>
<g class="w" text-anchor="middle"><text x="1143" y="589">dash</text><text x="1182" y="589">gap</text><text x="1221" y="589">dash</text><text x="1260" y="589">gap</text><text x="1300" y="589">dash</text><text x="1339" y="589">gap</text></g>
<rect x="1185" y="605" width="38" height="21" fill="#7d7d7d"/><rect x="1223" y="605" width="20" height="21" fill="#575757"/><rect x="1248" y="605" width="38" height="21" fill="#7d7d7d"/><rect x="1286" y="605" width="19" height="21" fill="#575757"/>
<path class="ch" style="stroke:#6e6e6e" d="M1229 614l3.500 3 3.500-3M1291 614l3.500 3 3.500-3M1277 707l3.500 3 3.500-3"/>
<path class="w1" d="M1342 613h11l-3-3M1354 619h-11l3 3"/>
<rect x="1186" y="635" width="55" height="21" fill="#585858"/><rect x="1248" y="635" width="56" height="21" fill="#585858"/>
<path class="ch" style="stroke:#6e6e6e" d="M1191 642l3.500-3 3.500 3M1191 649l3.500 3 3.500-3M1254 642l3.500-3 3.500 3M1254 649l3.500 3 3.500-3"/>
<text class="w" x="1207" y="649">100%</text><text class="w" x="1270" y="649">100%</text>
<path class="w1" style="stroke-width:1.800" d="M1341 639l13 13M1344 640c3-2 6 0 5 3M1350 650c-3 2-6 0-5-3"/>
<rect x="1185.500" y="665.500" width="44" height="21" fill="none" stroke="#616161"/><path d="M1207.500 665.500v21" stroke="#616161"/>
<path class="w1" d="M1190 672h6M1192 679h11l-3-3M1212 672h8M1212 679h11l-3-3"/>
<rect x="1185" y="699" width="88" height="21" fill="#7d7d7d"/><rect x="1273" y="699" width="18" height="21" fill="#575757"/>
<path class="w1" d="M1327 700v20" stroke-dasharray="2 1"/><path class="wf" d="M1325 710l-7-5v10zM1329 710l6-5v10z"/>
<path class="wf" d="M1347 709l-7-8h14zM1347 711l-7 8h14z"/>

<!-- layers footer -->
<text class="s" x="509" y="721" style="fill:#b8b8b8">3 Layers</text>
<path class="l1" d="M955 713h-6v10h10v-6M954 718l6-6M956 711.500h4.500v4.500"/>
<circle cx="979" cy="716" r="3.800" fill="none" stroke="#6c6c6c" stroke-width="1.300"/><path d="M982 719l3 3" stroke="#6c6c6c" stroke-width="1.400"/>
<rect x="1000.500" y="712.500" width="7" height="7" fill="#888" stroke="#c9c9c9"/><rect x="1003.500" y="716" width="6" height="6" fill="none" stroke="#999"/>
<path class="l1" d="M1024 713v4h5M1027 715l2 2-2 2"/><rect x="1030.500" y="712.500" width="8" height="9" class="l1"/><path class="l1" d="M1034.500 715v4M1032.500 717h4"/>
<rect x="1053.500" y="712.500" width="10" height="9.500" class="l1"/><path class="l1" d="M1058.500 715v5M1056 717.500h5"/>
<path class="l1" d="M1079 714.500h10M1080 714.500l.7 8h6.600l.7-8M1082 714.500v-2h4v2M1083 716.500v4.500M1085 716.500v4.500"/>

<!-- status bar -->
<rect x="77" y="712" width="52" height="15.500" fill="#484848"/><text class="s" x="81" y="725" style="fill:#d0d0d0">100%</text>
<path class="ch" d="M133 720l3.500 3 3.500-3M233 720l3.500 3 3.500-3"/>
<path d="M155 716h1.500v9H155zM164 716v9l-5-4.500zM179 716v9l-5-4.500z" fill="#6e6e6e"/>
<rect x="188" y="712" width="40" height="15.500" fill="#484848"/><text class="s" x="191" y="725" style="fill:#d0d0d0">1</text>
<path d="M256 716v9l5-4.500zM270 716v9l5-4.500zM277 716h1.500v9H277z" fill="#6e6e6e"/>
<rect x="288" y="712" width="1" height="16" fill="#444"/>
<text class="s" x="388" y="725" text-anchor="middle" style="fill:#b5b5b5">Selection</text>

<!-- taskbar -->
<rect y="728" width="1366" height="40" fill="#dee5f0"/>
<path d="M16 742.500l7-1v6.500h-7zM24 741.300l8.500-1.300v8h-8.500zM16 749h7v6.500l-7-1zM24 749h8.500v8l-8.500-1.300z" fill="#0c0c0c"/>
<rect x="49" y="729" width="342" height="39" fill="#fff"/>
<circle cx="70" cy="746" r="5.500" fill="none" stroke="#222" stroke-width="1.200"/><path d="M66 750l-5.500 6.500" stroke="#222" stroke-width="1.300"/>
<text x="88" y="754" font-size="14.500" fill="#222" textLength="128">Type here to search</text>
<circle cx="416" cy="748.500" r="6.500" fill="none" stroke="#111" stroke-width="2"/>
<path d="M456 741h15M459 744h9v9h-9zM456 756h15M471 743h2v2.500h-2zM471 748h2v2.500h-2z" fill="none" stroke="#222" stroke-width="1.200"/>
<circle cx="515" cy="748" r="11" fill="#5b2a56"/><circle cx="515" cy="748" r="8.500" fill="#d96a96"/><rect x="508" y="744" width="14" height="9" fill="#3e1a3e"/><path d="M510 745h3v7h-3zM517 745h3v7h-3z" fill="#e890b0"/>
<rect x="553" y="737" width="22" height="22" rx="2" fill="#0d1a38"/><path d="M559 742c1 5 1 10 3 13 3-3 7-9 6-13-1-2-3-1-3 1 0 3 1 7 0 10" fill="none" stroke="#e8e8e8" stroke-width="1.600"/>
<path d="M604 741c3-4 7-2 9 1 3 1 5 3 4 6 2 3 1 8-2 9-3 2-8 2-10 0 2-4 1-6 2-8-3-2-4-5-3-8z" fill="#c87020"/><path d="M606 757c3 1 8 1 10-1l1 3h-11z" fill="#eee" stroke="#333" stroke-width=".7"/><circle cx="611" cy="746" r="2.500" fill="#7a3a10"/><path d="M610 750h5v4h-5z" fill="#3a1a08"/>
<rect x="638" y="728" width="47" height="40" fill="#ecf0f6"/>
<rect x="651" y="737" width="22" height="22" rx="3" fill="#330000"/><text x="655" y="753" font-size="13.500" font-weight="700" fill="#ff9a00">Ai</text>
<rect x="637" y="766" width="48" height="2" fill="#3f7ab8"/><rect x="690" y="766" width="45" height="2" fill="#3f7ab8"/>
<rect x="700" y="737" width="22" height="22" rx="4" fill="#e8366e"/><path d="M700 748h22v7a4 4 0 0 1-4 4h-14a4 4 0 0 1-4-4z" fill="#f5a050" opacity=".8"/><path d="M711 737h7a4 4 0 0 1 4 4v8h-11z" fill="#b04ad8" opacity=".7"/><circle cx="711" cy="748" r="5.500" fill="none" stroke="#fff" stroke-width="1.800"/><circle cx="714" cy="748" r="3" fill="none" stroke="#fff" stroke-width="1.200"/>
<rect x="1047" y="728" width="16" height="40" fill="#f2f4f8"/>
<path d="M1051 739l3.500-3.500 3.500 3.500M1051 757l3.500 3.500 3.500-3.500" fill="none" stroke="#222" stroke-width="1.700"/>
<path d="M1069 751l6-6 6 6" fill="none" stroke="#222" stroke-width="1.300"/>
<rect x="1094.500" y="744" width="8" height="9" rx="2" fill="none" stroke="#222" stroke-width="1.200"/><path d="M1102.500 746l3-1v7l-3-1M1096 741c2-1 5-1 6 0M1096 756c2 1 5 1 6 0" fill="none" stroke="#222"/>
<path d="M1116 753a5 5 0 0 1 1-9c2-3 8-3 10 0 3 0 4 2 4 3h-8c-3 1-4 4-4 6z" fill="#555"/><circle cx="1126" cy="752" r="5" fill="#777"/><path d="M1124.500 749.500v5M1127.500 749.500v5" stroke="#fff" stroke-width="1.200"/>
<rect x="1143" y="745" width="12.500" height="7" fill="#222"/><path d="M1139 745h3M1140 741v3M1141.500 741v3M1140.500 746v4h3" fill="none" stroke="#222"/><rect x="1155.500" y="747" width="1.500" height="3" fill="#222"/>
<path d="M1167 754a12 12 0 0 1 10-11M1170 754a8 8 0 0 1 7-7M1173 754a5 5 0 0 1 4-4" fill="none" stroke="#555"/><circle cx="1175.500" cy="752.500" r="1.500" fill="#111"/>
<path d="M1187 746h3l4-3.500v12l-4-3.500h-3z" fill="none" stroke="#222"/><path d="M1196 745c1.500 2 1.500 6 0 8M1199 743c2 3 2 9 0 12" fill="none" stroke="#555"/><path d="M1202 742c2 3 2 11 0 14" fill="none" stroke="#bbb"/>
<g class="tb"><text x="1224" y="744" text-anchor="middle">ENG</text><text x="1224" y="761" text-anchor="middle">US</text><text x="1277" y="743" text-anchor="middle">21:22</text><text x="1277" y="761" text-anchor="middle">25/01/2021</text></g>
<path d="M1325 740h16v11h-8l-3 3v-3h-5z" fill="#111"/><path d="M1328 743h10M1328 746h10" stroke="#eee" stroke-width=".8"/>
<circle cx="1340" cy="755" r="7.500" fill="#c8c8c8" stroke="#555"/><text x="1340" y="759" font-size="11" fill="#111" text-anchor="middle" font-weight="700">1</text>
</svg>

<div id="sp"></div>

<div id="rows">
<div class="r g sel"><svg class="e"><use href="#E"/></svg><i class="b"></i><svg class="c"><use href="#D"/></svg><svg class="th l" viewBox="0 0 18 18"><circle cx="5" cy="5" r="2.500" fill="#8a3a6a"/><circle cx="13" cy="4" r="2.500" fill="#8a3a6a"/><path d="M3 8h5l1 3H2zM10 11h6l2 5h-9z" fill="#1aa198"/></svg><span class="n l">Layer 2 copy</span><i class="o"></i></div>
<div class="r g"><svg class="e"><use href="#E"/></svg><i class="b"></i><svg class="th"><use href="#P"/></svg><span class="n">&lt;Ellipse&gt;</span><i class="o"></i></div>
<div class="r g"><svg class="e"><use href="#E"/></svg><i class="b"></i><svg class="th"><use href="#P"/></svg><span class="n">&lt;Ellipse&gt;</span><i class="o"></i></div>
<div class="r g"><svg class="e"><use href="#E"/></svg><i class="b"></i><svg class="th"><use href="#P"/></svg><span class="n">&lt;Ellipse&gt;</span><i class="o"></i></div>
<div class="r g"><svg class="e"><use href="#E"/></svg><i class="b"></i><svg class="th"><use href="#P"/></svg><span class="n">&lt;Ellipse&gt;</span><i class="o"></i></div>
<div class="r g"><svg class="e"><use href="#E"/></svg><i class="b"></i><svg class="th"><use href="#P"/></svg><span class="n">&lt;Ellipse&gt;</span><i class="o"></i></div>
<div class="r g"><svg class="e"><use href="#E"/></svg><i class="b"></i><svg class="th" viewBox="0 0 18 18"><rect x="1" y="1" width="16" height="16" fill="#1aa198"/></svg><span class="n">&lt;Rectangle&gt;</span><i class="o"></i></div>
<div class="r g"><svg class="e"><use href="#E"/></svg><i class="b"></i><svg class="c z"><use href="#Z"/></svg><svg class="th" viewBox="0 0 18 18"><circle cx="6" cy="3.500" r="2.500" fill="#a5487e"/><path d="M3 6h6l2 4H1z" fill="#4c9c94"/><path d="M10 11h5l2 5H8z" fill="#1aa198"/></svg><span class="n">&lt;Group&gt;</span><i class="o"></i></div>
<div class="r g"><svg class="e"><use href="#E"/></svg><i class="b"></i><svg class="th" viewBox="0 0 18 18"><path d="M6 16L12 3" stroke="#000" stroke-width="5"/></svg><span class="n">&lt;Path&gt;</span><i class="o"></i></div>
<div class="r g"><svg class="e"><use href="#E"/></svg><i class="b"></i><svg class="c z"><use href="#Z"/></svg><svg class="th" viewBox="0 0 18 18"><path d="M5 2h8l1 6H4z" fill="#e8609e"/><path d="M5 8h8l4 9H1z" fill="#1aa198"/></svg><span class="n">&lt;Group&gt;</span><i class="o"></i></div>
<div class="r h"><svg class="e"><use href="#E"/></svg><i class="b"></i><svg class="c"><use href="#D"/></svg><svg class="th l"></svg><span class="n l">Layer 2</span><i class="o"></i></div>
<div class="r h"><svg class="e"><use href="#E"/></svg><i class="b"></i><svg class="th"></svg><span class="n">&lt;Guide&gt;</span><i class="o"></i></div>
<div class="r h"><svg class="e"><use href="#E"/></svg><i class="b"></i><svg class="th"></svg><span class="n">&lt;Guide&gt;</span><i class="o"></i></div>
<div class="r j"><svg class="k on"><use href="#K"/></svg><i class="b"></i><svg class="c"><use href="#D"/></svg><svg class="th l" viewBox="0 0 18 18"><circle cx="9" cy="3.500" r="2" fill="none" stroke="#999" stroke-width=".7"/><path d="M6 6h6l1 11H5z" fill="#d5d5d5"/></svg><span class="n l">Layer 1</span><i class="o"></i></div>
<div class="r d"><svg class="e"><use href="#E"/></svg><svg class="k"><use href="#K"/></svg><i class="b"></i><svg class="th" viewBox="0 0 18 18"><path d="M3 3l12 12" stroke="#000" stroke-width="4"/></svg><span class="n">&lt;Path&gt;</span><i class="o"></i></div>
<div class="r d"><svg class="e"><use href="#E"/></svg><svg class="k"><use href="#K"/></svg><i class="b"></i><svg class="th" viewBox="0 0 18 18"><path d="M6 2c1 4 6 5 5 9-1 2 0 4 1 6" fill="none" stroke="#000" stroke-width="3.500"/></svg><span class="n">&lt;Path&gt;</span><i class="o"></i></div>
<div class="r d"><svg class="e"><use href="#E"/></svg><svg class="k"><use href="#K"/></svg><i class="b"></i><svg class="th" viewBox="0 0 18 18"><path d="M7 2l3 15" stroke="#000" stroke-width="4"/></svg><span class="n">&lt;Path&gt;</span><i class="o"></i></div>
<div class="r d"><svg class="e"><use href="#E"/></svg><svg class="k"><use href="#K"/></svg><i class="b"></i><svg class="th" viewBox="0 0 18 18"><path d="M3 15L15 3" stroke="#000" stroke-width="4"/></svg><span class="n">&lt;Path&gt;</span><i class="o"></i></div>
<div class="r d"><svg class="e"><use href="#E"/></svg><svg class="k"><use href="#K"/></svg><i class="b"></i><svg class="th" viewBox="0 0 18 18"><path d="M8 2l4 2-5 3 5 2-6 3 4 1-3 3" fill="none" stroke="#000" stroke-width="1.500"/></svg><span class="n">&lt;Path&gt;</span><i class="o"></i></div>
<div class="r d"><svg class="e"><use href="#E"/></svg><svg class="k"><use href="#K"/></svg><i class="b"></i><svg class="th" viewBox="0 0 18 18"><path d="M1 11C3 5 6 3 9 3s6 2 8 8" fill="none" stroke="#aaa" stroke-width=".8"/></svg><span class="n">&lt;Path&gt;</span><i class="o"></i></div>
<div class="r d"><svg class="e"><use href="#E"/></svg><svg class="k"><use href="#K"/></svg><i class="b"></i><svg class="th" viewBox="0 0 18 18"><path d="M1 6c3 6 6 8 9 8s5-3 7-7" fill="none" stroke="#666" stroke-width=".9"/></svg><span class="n">&lt;Path&gt;</span><i class="o"></i></div>
<div class="r d"><svg class="e"><use href="#E"/></svg><svg class="k"><use href="#K"/></svg><i class="b"></i><svg class="th" viewBox="0 0 18 18"><path d="M5 1l4 8 5 8" fill="none" stroke="#999" stroke-width=".8"/></svg><span class="n">&lt;Path&gt;</span><i class="o"></i></div>
<div class="r d"><svg class="e"><use href="#E"/></svg><svg class="k"><use href="#K"/></svg><i class="b"></i><svg class="th" viewBox="0 0 18 18"><path d="M14 2C9 5 7 10 5 17M12 4C9 8 8 12 7 17" fill="none" stroke="#bbb" stroke-width=".8"/></svg><span class="n">&lt;Path&gt;</span><i class="o"></i></div>
<div class="r d"><svg class="e"><use href="#E"/></svg><svg class="k"><use href="#K"/></svg><i class="b"></i><svg class="th" viewBox="0 0 18 18"><path d="M4 1c4 3 6 9 9 16" fill="none" stroke="#aaa" stroke-width=".8"/></svg><span class="n">&lt;Path&gt;</span><i class="o"></i></div>
<div class="r d"><svg class="e"><use href="#E"/></svg><svg class="k"><use href="#K"/></svg><i class="b"></i><svg class="th" viewBox="0 0 18 18"><path d="M7 5h3l1 12H7z" fill="#d8d8d8"/><path d="M7 2l1 6" stroke="#aaa" stroke-width=".7"/></svg><span class="n">&lt;Path&gt;</span><i class="o"></i></div>
<div class="r d"><svg class="e"><use href="#E"/></svg><svg class="k"><use href="#K"/></svg><i class="b"></i><svg class="th" viewBox="0 0 18 18"><path d="M7 7h4v10H7z" fill="#d8d8d8"/><path d="M6 2l3 6 3-6" fill="none" stroke="#aaa" stroke-width=".7"/></svg><span class="n">&lt;Path&gt;</span><i class="o"></i></div>
</div>
</body></html>
